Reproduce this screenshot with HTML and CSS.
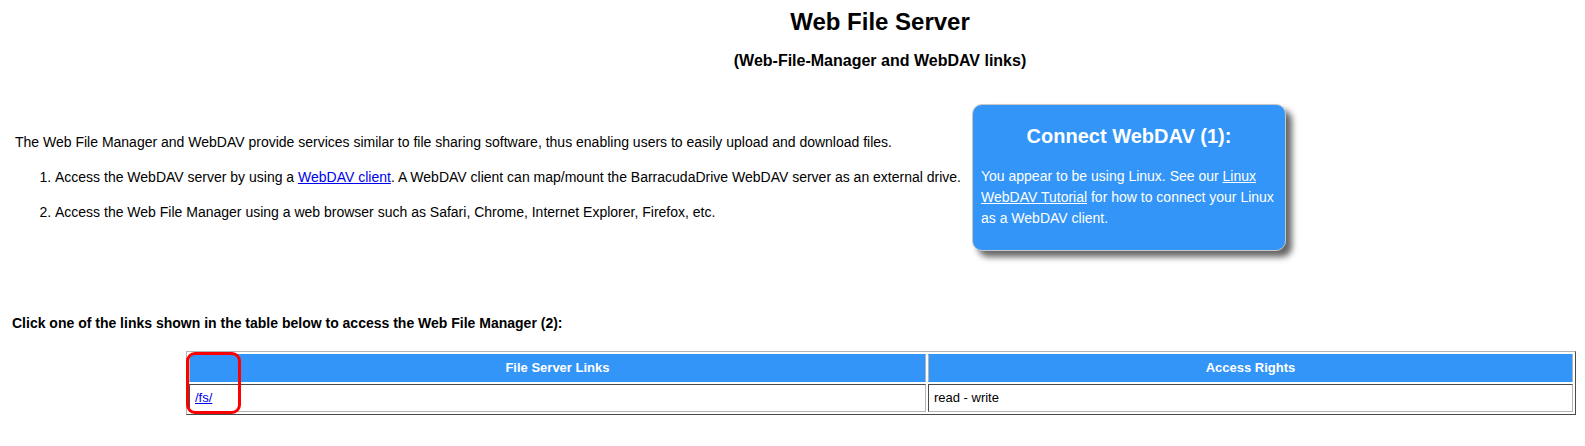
FILE: index.html
```html
<!DOCTYPE html>
<html>
<head>
<meta charset="utf-8">
<title>Web File Server</title>
<link rel="stylesheet" href="styles.css">
</head>
<body>
<div class="head">
  <h1 class="title">Web File Server</h1>
  <h2 class="sub">(Web-File-Manager and WebDAV links)</h2>
</div>
<div class="intro">
  <div class="intro-text">
    <p>The Web File Manager and WebDAV provide services similar to file sharing software, thus enabling users to easily upload and download files.</p>
    <ol>
      <li>Access the WebDAV server by using a <a href="#">WebDAV client</a>. A WebDAV client can map/mount the BarracudaDrive WebDAV server as an external drive.</li>
      <li>Access the Web File Manager using a web browser such as Safari, Chrome, Internet Explorer, Firefox, etc.</li>
    </ol>
  </div>
  <div class="box">
    <h3 class="box-title">Connect WebDAV (1):</h3>
    <p class="box-text">You appear to be using Linux. See our <a href="#">Linux WebDAV Tutorial</a> for how to connect your Linux as a WebDAV client.</p>
  </div>
</div>
<p class="lead">Click one of the links shown in the table below to access the Web File Manager (2):</p>
<div class="table-wrap">
  <table class="links">
    <tr><th>File Server Links</th><th>Access Rights</th></tr>
    <tr><td><a href="#">/fs/</a></td><td>read - write</td></tr>
  </table>
  <div class="marker"></div>
</div>
</body>
</html>
```
FILE: styles.css
```css
body {
  margin: 8px;
  font-family: "Liberation Sans", Arial, sans-serif;
  color: #000;
  background: #fff;
}
.head {
  padding-left: 175px;
  text-align: center;
}
.title {
  margin: 0;
  font-size: 24px;
  font-weight: bold;
  line-height: normal;
}
.sub {
  margin: 16px 0 0;
  font-size: 16px;
  font-weight: bold;
  line-height: normal;
}
.intro {
  display: flex;
  align-items: center;
  margin-top: 34px;
}
.intro-text {
  flex: 0 0 auto;
  width: 964px;
  box-sizing: border-box;
  padding-left: 7px;
  font-size: 14px;
  line-height: 21px;
  white-space: nowrap;
}
.intro-text p {
  margin: 0;
}
.intro-text ol {
  margin: 14px 0 0;
  padding-left: 40px;
}
.intro-text li + li {
  margin-top: 14px;
}
.box {
  flex: 0 0 auto;
  width: 314px;
  box-sizing: border-box;
  background: #3295f7;
  border: 1px solid #c8c8c8;
  border-radius: 10px;
  box-shadow: 6px 6px 6px #666;
  color: #fff;
  padding: 20px 8px 21px 8px;
}
.box-title {
  margin: 0 0 18px;
  font-size: 20px;
  font-weight: bold;
  text-align: center;
  line-height: normal;
}
.box-text {
  margin: 0;
  font-size: 14px;
  line-height: 21px;
}
.box-text a {
  color: #fff;
}
.lead {
  margin: 64px 0 0;
  padding-left: 4px;
  font-size: 14px;
  font-weight: bold;
  line-height: 16px;
}
.table-wrap {
  position: relative;
  margin: 20px 0 0 178px;
  width: 1390px;
}
.links {
  width: 100%;
  border-collapse: separate;
  border-spacing: 2px;
  border: 1px solid;
  border-color: #b4b4b4 #4a4a4a #4a4a4a #b4b4b4;
  font-size: 13px;
}
.links th {
  background: #3295f7;
  color: #fff;
  font-weight: bold;
  text-align: center;
  line-height: 16px;
  padding: 5px;
  border: 1px solid;
  border-color: #3295f7 #b4b4b4 #3295f7 #b4b4b4;
}
.links td {
  text-align: left;
  line-height: 16px;
  padding: 5px;
  border: 1px solid;
  border-color: #4a4a4a #b4b4b4 #b4b4b4 #4a4a4a;
}
.marker {
  position: absolute;
  left: 0;
  top: 1px;
  width: 55px;
  height: 62px;
  box-sizing: border-box;
  border: 3px solid #f00;
  border-radius: 9px;
}
```
